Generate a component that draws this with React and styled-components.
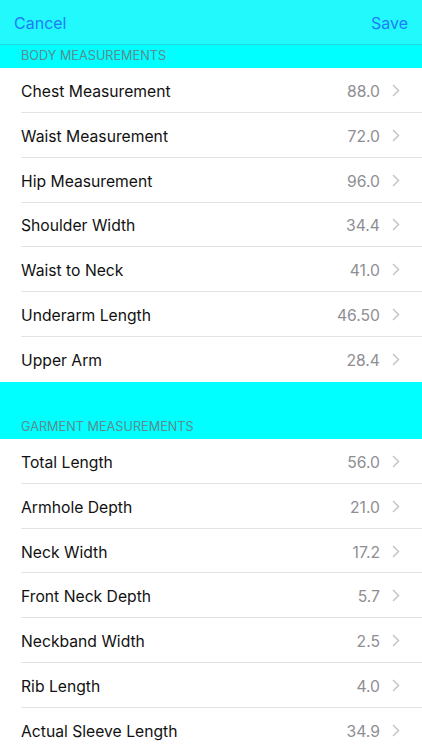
import styled, { createGlobalStyle } from "styled-components";

const BODY = [
  { label: "Chest Measurement", value: "88.0" },
  { label: "Waist Measurement", value: "72.0" },
  { label: "Hip Measurement", value: "96.0" },
  { label: "Shoulder Width", value: "34.4" },
  { label: "Waist to Neck", value: "41.0" },
  { label: "Underarm Length", value: "46.50" },
  { label: "Upper Arm", value: "28.4" },
];

const GARMENT = [
  { label: "Total Length", value: "56.0" },
  { label: "Armhole Depth", value: "21.0" },
  { label: "Neck Width", value: "17.2" },
  { label: "Front Neck Depth", value: "5.7" },
  { label: "Neckband Width", value: "2.5" },
  { label: "Rib Length", value: "4.0" },
  { label: "Actual Sleeve Length", value: "34.9" },
];

const GlobalStyle = createGlobalStyle`
  html, body {
    margin: 0;
    padding: 0;
    background: #ffffff;
  }
  body {
    font-family: Inter, "Liberation Sans", sans-serif;
    -webkit-font-smoothing: antialiased;
  }
`;

const Screen = styled.div`
  width: 422px;
  height: 750px;
  overflow: hidden;
  background: #ffffff;
`;

const NavBar = styled.div`
  height: 44px;
  display: flex;
  align-items: center;
  justify-content: space-between;
  padding: 0 14px;
  background: #22f9fc;
  border-bottom: 1px solid #1fd9dc;
`;

const NavButton = styled.button`
  background: none;
  border: none;
  padding: 1px 0 0;
  font-family: inherit;
  font-size: 16px;
  color: #1f7cf7;
  cursor: pointer;
`;

const SectionHeader = styled.div`
  height: ${(p) => p.$height}px;
  display: flex;
  align-items: flex-end;
  padding: 0 21px 5px;
  box-sizing: border-box;
  background: #00ffff;
  font-size: 12.7px;
  color: #5b8d8f;
  text-transform: uppercase;
`;

const List = styled.div`
  background: #ffffff;
`;

const Row = styled.div`
  height: 44.85px;
  display: flex;
  align-items: center;
  margin-left: 21px;
  padding: 3px 22px 0 0;
  box-sizing: border-box;
  border-bottom: ${(p) => (p.$last ? "none" : "1px solid #e3e3e6")};
`;

const Label = styled.span`
  flex: 1;
  font-size: 15.7px;
  color: #111111;
`;

const Value = styled.span`
  font-size: 15.7px;
  color: #8e8e93;
  margin-right: 12px;
`;

const ChevronIcon = styled.svg`
  margin-top: -2px;
`;

const Chevron = () => (
  <ChevronIcon width="8" height="13" viewBox="0 0 8 13" fill="none">
    <path d="M1 1l5.5 5.5L1 12" stroke="#c7c7cc" strokeWidth="1.6" />
  </ChevronIcon>
);

function Section({ title, headerHeight, items }) {
  return (
    <>
      <SectionHeader $height={headerHeight}>{title}</SectionHeader>
      <List>
        {items.map((item, i) => (
          <Row key={item.label} $last={i === items.length - 1}>
            <Label>{item.label}</Label>
            <Value>{item.value}</Value>
            <Chevron />
          </Row>
        ))}
      </List>
    </>
  );
}

export default function App() {
  return (
    <Screen>
      <GlobalStyle />
      <NavBar>
        <NavButton>Cancel</NavButton>
        <NavButton>Save</NavButton>
      </NavBar>
      <Section title="Body Measurements" headerHeight={23} items={BODY} />
      <Section title="Garment Measurements" headerHeight={57} items={GARMENT} />
    </Screen>
  );
}
